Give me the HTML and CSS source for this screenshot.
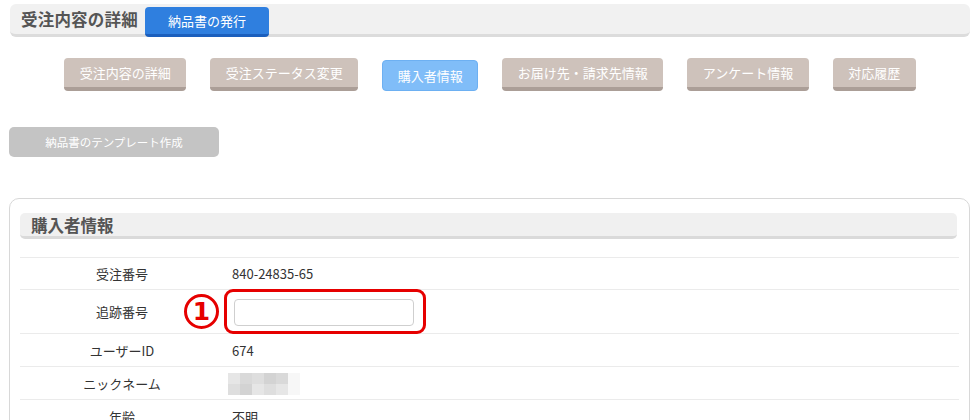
FILE: index.html
```html
<!DOCTYPE html>
<html lang="ja">
<head>
<meta charset="utf-8">
<link rel="stylesheet" href="styles.css">
</head>
<body>
<div class="topbar">
  <h1 class="title">受注内容の詳細</h1>
  <a class="btn-blue">納品書の発行</a>
</div>

<nav class="tabs">
  <a class="tab">受注内容の詳細</a>
  <a class="tab">受注ステータス変更</a>
  <a class="tab active">購入者情報</a>
  <a class="tab">お届け先・請求先情報</a>
  <a class="tab">アンケート情報</a>
  <a class="tab">対応履歴</a>
</nav>

<a class="btn-template">納品書のテンプレート作成</a>

<section class="panel">
  <h2 class="panel-head">購入者情報</h2>
  <div class="rows">
    <div class="row"><div class="label">受注番号</div><div class="value">840-24835-65</div></div>
    <div class="row row-input">
      <div class="label">追跡番号</div>
      <div class="value">
        <div class="input-wrap">
          <span class="num">1</span>
          <input class="text-input" type="text">
          <span class="highlight"></span>
        </div>
      </div>
    </div>
    <div class="row"><div class="label">ユーザーID</div><div class="value">674</div></div>
    <div class="row"><div class="label">ニックネーム</div><div class="value">
      <div class="mosaic">
        <i class="m1"></i><i class="m2"></i><i class="m3"></i><i class="m4"></i><i class="m2"></i><i class="m5"></i>
        <i class="m3"></i><i class="m4"></i><i class="m1"></i><i class="m3"></i><i class="m1"></i><i class="m5"></i>
      </div>
    </div></div>
    <div class="row"><div class="label">年齢</div><div class="value">不明</div></div>
  </div>
</section>
</body>
</html>
```

FILE: styles.css
```css
* { box-sizing: border-box; }
body {
  margin: 0;
  padding-top: 4px;
  background: #fff;
  font-family: "Noto Sans CJK JP", "Noto Sans", sans-serif;
  color: #333;
}
a { text-decoration: none; }

.topbar {
  margin: 0 10px;
  height: 33px;
  background: #f1f1f1;
  border-radius: 6px;
  border-bottom: 3px solid #dcdcdc;
  display: flex;
  align-items: flex-start;
}
.title {
  margin: 0;
  padding-left: 11px;
  font-size: 16.5px;
  font-weight: bold;
  color: #555;
  line-height: 30px;
  letter-spacing: 0.2px;
}
.btn-blue {
  margin-left: 7px;
  margin-top: 3px;
  width: 124px;
  height: 30px;
  background: #2f7fdf;
  border-bottom: 3px solid #1b5fbd;
  border-radius: 4px;
  color: #fff;
  font-size: 13px;
  line-height: 27px;
  text-align: center;
}

.tabs {
  margin-top: 21px;
  display: flex;
  justify-content: center;
  align-items: flex-end;
  gap: 24px;
}
.tab {
  height: 33px;
  padding: 0 15.5px;
  background: #cec2bb;
  border-bottom: 4px solid #ab9e97;
  border-radius: 4px;
  color: #fff;
  font-size: 13px;
  line-height: 29px;
}
.tab.active {
  height: 31px;
  background: #80bdf8;
  border: 1px solid #6db0f2;
  line-height: 29px;
  padding: 0 14.5px;
}

.btn-template {
  display: block;
  margin: 36px 0 0 9px;
  width: 210px;
  height: 30px;
  background: #c4c4c4;
  border-radius: 5px;
  color: #fff;
  font-size: 11.5px;
  line-height: 30px;
  text-align: center;
}

.panel {
  margin: 41px 10px 0 9px;
  border: 1px solid #d8d8d8;
  border-radius: 10px;
  padding: 14px 10px 0 10px;
}
.panel-head {
  margin: 0 2px 0 0;
  height: 26px;
  background: #f0f0f0;
  border-radius: 5px;
  border-bottom: 3px solid #dadada;
  padding-left: 11px;
  font-size: 16.5px;
  font-weight: bold;
  color: #555;
  line-height: 24px;
}
.rows {
  margin-top: 18px;
}
.row {
  display: flex;
  align-items: center;
  height: 33px;
  border-top: 1px solid #ebebeb;
  font-size: 13px;
}
.row:first-child { height: 32px; }
.row.row-input { height: 44px; }
.label {
  width: 204px;
  text-align: center;
}
.value {
  padding-left: 8px;
}

.input-wrap {
  position: relative;
  margin-left: 2px;
  width: 180px;
  height: 27px;
  margin-top: 1px;
}
.text-input {
  display: block;
  width: 180px;
  height: 27px;
  border: 1px solid #cfcfcf;
  border-radius: 4px;
  background: #fff;
  margin: 0;
}
.highlight {
  position: absolute;
  left: -10px;
  top: -10px;
  right: -12px;
  bottom: -8px;
  border: 3px solid #e60000;
  border-radius: 9px;
  pointer-events: none;
}
.num {
  position: absolute;
  left: -50px;
  top: -5px;
  width: 35px;
  height: 35px;
  border: 3px solid #e60000;
  border-radius: 50%;
  color: #e60000;
  font-family: "DejaVu Sans", sans-serif;
  font-weight: bold;
  font-size: 25px;
  line-height: 29px;
  text-align: center;
}

.mosaic {
  display: grid;
  grid-template-columns: repeat(6, 12px);
  grid-template-rows: repeat(2, 11px);
  margin-left: -4px;
  margin-top: 2px;
}
.mosaic i { display: block; }
.m1 { background: #e6e6e6; }
.m2 { background: #d9d9d9; }
.m3 { background: #dedede; }
.m4 { background: #d3d3d3; }
.m5 { background: #f7f7f7; }
```
